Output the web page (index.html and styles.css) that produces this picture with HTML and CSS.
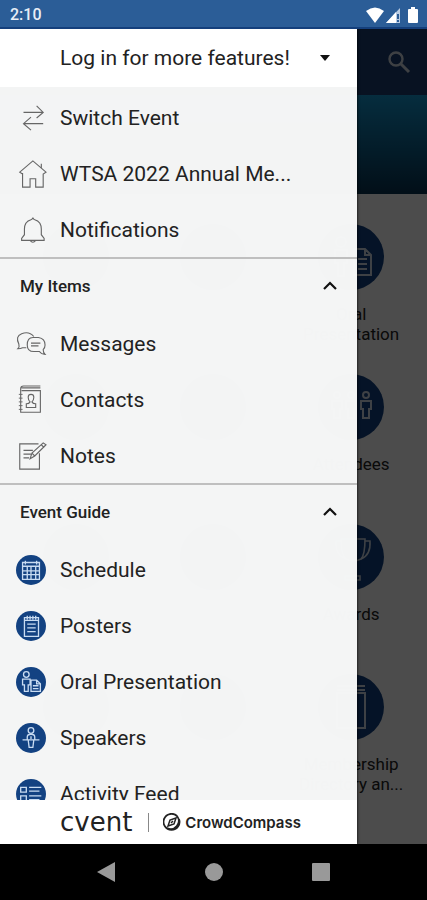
FILE: index.html
```html
<!DOCTYPE html>
<html lang="en">
<head>
    <meta charset="UTF-8">
    <meta name="viewport" content="width=device-width, initial-scale=1.0">
    <title>WTSA 2022 Annual Meeting</title>
    <link rel="stylesheet" href="styles.css">
</head>
<body>
    <header class="status-bar">
        <span>2:10</span>
        <svg class="status-icons" width="56" height="18" viewBox="0 0 56 18" fill="#fff">
            <path d="M1 5 Q10 -2 19 5 L10 17 Z"/>
            <path d="M35 2 V17 H21 Z" fill="#b9cbe2"/>
            <path d="M31 6 V17 H21 Z"/>
            <path d="M32 8 h2 v5 h-2 z M32 14 h2 v2 h-2 z" fill="#2b5d97"/>
            <path d="M46 1 h4 v2 h2 q1 0 1 1 v12 q0 1 -1 1 h-8 q-1 0 -1 -1 v-12 q0 -1 1 -1 h2 z"/>
        </svg>
    </header>

    <main class="stage">
        <!-- Event home, under the open menu -->
        <div class="home">
            <div class="app-bar">
                <button class="search-button" aria-label="Search">
                    <svg width="24" height="24" viewBox="0 0 24 24" fill="none" stroke="#fff" stroke-width="2.4">
                        <circle cx="9" cy="9" r="6.5"/>
                        <path d="M14 14 L22 22" stroke-width="3"/>
                    </svg>
                </button>
            </div>
            <div class="banner"></div>
            <div class="tiles">
                <div class="tile"><span class="disc"></span></div>
                <div class="tile"><span class="disc"></span></div>
                <a class="tile" href="#oral">
                    <span class="disc">
                        <svg width="44" height="44" viewBox="0 0 44 44" fill="none" stroke="#fff" stroke-width="2">
                            <circle cx="12" cy="7" r="5"/>
                            <path d="M6 15 h12 v13 h-3 v13 h-6 v-13 h-3 z"/>
                            <path d="M25 14 H36 L42 20 V40 H25 Z M36 14 V20 H42 M29 24 H38 M29 29 H38 M29 34 H38"/>
                        </svg>
                    </span>
                    <span class="tile-label">Oral Presentation</span>
                </a>
                <div class="tile"><span class="disc"></span></div>
                <div class="tile"><span class="disc"></span></div>
                <a class="tile" href="#attendees">
                    <span class="disc">
                        <svg width="44" height="44" viewBox="0 0 44 44" fill="none" stroke="#fff" stroke-width="2">
                            <circle cx="8" cy="10" r="3"/>
                            <path d="M3 16 h10 v8 h-2 v9 h-6 v-9 h-2 z"/>
                            <circle cx="37" cy="10" r="3"/>
                            <path d="M32 16 h10 v8 h-2 v9 h-6 v-9 h-2 z"/>
                            <circle cx="22" cy="10" r="3"/>
                            <path d="M17 16 h10 v8 h-2 v9 h-6 v-9 h-2 z"/>
                        </svg>
                    </span>
                    <span class="tile-label">Attendees</span>
                </a>
                <div class="tile"><span class="disc"></span></div>
                <div class="tile"><span class="disc"></span></div>
                <a class="tile" href="#awards">
                    <span class="disc">
                        <svg width="44" height="44" viewBox="0 0 44 44" fill="none" stroke="#fff" stroke-width="1.6">
                            <path d="M12 4 H36 Q36 20 32 24 Q24 28 17 24 Q12 20 12 4 Z"/>
                            <path d="M36 6 H41 Q42 20 32 24 M12 6 H7 Q6 20 17 24"/>
                            <path d="M22 27 V38 M16 45 H31 V41 H16 Z"/>
                        </svg>
                    </span>
                    <span class="tile-label">Awards</span>
                </a>
                <div class="tile"><span class="disc"></span></div>
                <div class="tile"><span class="disc"></span></div>
                <a class="tile" href="#directory">
                    <span class="disc">
                        <svg width="44" height="44" viewBox="0 0 44 44" fill="none" stroke="#fff" stroke-width="2">
                            <path d="M8 1 H36 M8 5 H36 M8 8 H36 V43 H8 Z"/>
                        </svg>
                    </span>
                    <span class="tile-label">Membership Directory an...</span>
                </a>
            </div>
        </div>
        <div class="scrim"></div>

        <!-- Side menu -->
        <nav class="drawer">
            <button class="login">
                Log in for more features!
                <svg width="12" height="6" viewBox="0 0 12 6"><path d="M1 0 H11 L6 6 Z" fill="#111"/></svg>
            </button>
            <div class="menu">
                <ul class="menu-list first">
                    <li><a href="#switch">
                        <svg class="icon" viewBox="0 0 32 32">
                            <path d="M8 10 H29 M22 3 L29 10 L22 16 M29 22 H8 M16 15 L8 22 L16 29"/>
                        </svg>
                        <span>Switch Event</span>
                    </a></li>
                    <li><a href="#event">
                        <svg class="icon" viewBox="0 0 32 32">
                            <path d="M7 16 L4 14 L18 2 L32 14 L29 16 V30 H21 V21 H15 V30 H7 V15 M27 10 V5"/>
                        </svg>
                        <span>WTSA 2022 Annual Me...</span>
                    </a></li>
                    <li><a href="#notifications">
                        <svg class="icon" viewBox="0 0 32 32">
                            <path d="M18 3 Q19 5 20 5 Q27 7 27 15 V21 L30 25 V27 H6 V25 L9 21 V15 Q9 7 16 5 Q17 5 18 3 M15 27 Q18 31 21 27"/>
                        </svg>
                        <span>Notifications</span>
                    </a></li>
                </ul>

                <button class="section">
                    My Items
                    <svg width="14" height="9" viewBox="0 0 14 9"><path d="M1 8 L7 2 L13 8" fill="none" stroke="#111" stroke-width="2.2"/></svg>
                </button>
                <ul class="menu-list">
                    <li><a href="#messages">
                        <svg class="icon" viewBox="0 0 32 32">
                            <path d="M11 20 H7 Q5 21 2 21 Q4 19 3 16 Q-1 8 6 5 Q14 2 19 8"/>
                            <path d="M18 9 H24 Q31 10 31 17 Q31 20 29 22 Q29 25 31 27 Q27 27 25 24 H19 Q12 24 12 17 Q12 9 18 9 Z M16 15 H26 M16 18 H24"/>
                        </svg>
                        <span>Messages</span>
                    </a></li>
                    <li><a href="#contacts">
                        <svg class="icon" viewBox="0 0 32 32">
                            <path d="M26 1 H8 Q5 1 5 4 V29 H26 V6 H6 M6 3 H26"/>
                            <path d="M3 10 H7 M3 14 H7 M3 18 H7 M3 22 H7 M3 26 H7" stroke-width="1"/>
                            <path d="M16 10 Q19 10 19 13 Q19 16 17 18 Q18 20 21 20 V24 H11 V20 Q14 20 15 18 Q13 16 13 13 Q13 10 16 10 Z"/>
                        </svg>
                        <span>Contacts</span>
                    </a></li>
                    <li><a href="#notes">
                        <svg class="icon" viewBox="0 0 32 32">
                            <path d="M24 3 H4 V30 H25 V13 M8 10 H18 M8 14 H16 M8 18 H14"/>
                            <path d="M15 19 L17 13 L29 2 L32 4 L20 16 Z M17 13 L20 16 M27 4 L30 7"/>
                        </svg>
                        <span>Notes</span>
                    </a></li>
                </ul>

                <button class="section">
                    Event Guide
                    <svg width="14" height="9" viewBox="0 0 14 9"><path d="M1 8 L7 2 L13 8" fill="none" stroke="#111" stroke-width="2.2"/></svg>
                </button>
                <ul class="menu-list">
                    <li><a href="#schedule">
                        <svg class="icon badge" viewBox="0 0 32 32">
                            <circle cx="16" cy="16" r="16"/>
                            <path d="M7 8 H25 V26 H7 Z M7 12 H25 M7 17 H25 M7 21 H25 M12 12 V26 M16 12 V26 M21 12 V26 M10 6 V10 M22 6 V10"/>
                        </svg>
                        <span>Schedule</span>
                    </a></li>
                    <li><a href="#posters">
                        <svg class="icon badge" viewBox="0 0 32 32">
                            <circle cx="16" cy="16" r="16"/>
                            <path d="M9 7 H24 V27 H9 Z M9 10 H24 M12 5 V9 M15 5 V9 M18 5 V9 M21 5 V9 M12 14 H21 M12 18 H21 M12 22 H21"/>
                        </svg>
                        <span>Posters</span>
                    </a></li>
                    <li><a href="#oral">
                        <svg class="icon badge" viewBox="0 0 32 32">
                            <circle cx="16" cy="16" r="16"/>
                            <circle class="line" cx="11" cy="8" r="3"/>
                            <path d="M7 13 H15 V19 H13 V26 H9 V19 H7 Z M16 14 H22 L26 18 V26 H16 Z M22 14 V18 H26 M18 20 H24 M18 23 H24"/>
                        </svg>
                        <span>Oral Presentation</span>
                    </a></li>
                    <li><a href="#speakers">
                        <svg class="icon badge" viewBox="0 0 32 32">
                            <circle cx="16" cy="16" r="16"/>
                            <circle class="line" cx="16" cy="8" r="3"/>
                            <path d="M12 18 V15 Q12 12 16 12 Q20 12 20 15 V18 M7 18 H25 M13 18 L14 26 H18 L19 18 M16 14 V17"/>
                        </svg>
                        <span>Speakers</span>
                    </a></li>
                    <li><a href="#feed">
                        <svg class="icon badge" viewBox="0 0 32 32">
                            <circle cx="16" cy="16" r="16"/>
                            <path d="M5 9 H11 V14 H5 Z M5 18 H11 V23 H5 Z M14 9 H27 M14 13 H25 M14 18 H27 M14 22 H25"/>
                        </svg>
                        <span>Activity Feed</span>
                    </a></li>
                </ul>
            </div>
            <footer class="brand">
                <span class="cvent">cvent</span>
                <span class="bar"></span>
                <svg width="18" height="18" viewBox="0 0 18 18" fill="none" stroke="#222" stroke-width="1.8">
                    <path d="M14 3 A8 8 0 1 0 16 6 M4 15 A8 8 0 0 0 14 3"/>
                    <path d="M13 5 L11 11 L5 13 L7 7 Z M8 10 L10 8" stroke-width="1.5"/>
                </svg>
                <span class="crowd">CrowdCompass</span>
            </footer>
        </nav>
    </main>

    <div class="system-nav">
        <button aria-label="Back"><svg width="20" height="20" viewBox="0 0 20 20"><path d="M0 10 L18 0 V20 Z"/></svg></button>
        <button aria-label="Home"><svg width="20" height="20" viewBox="0 0 20 20"><circle cx="10" cy="10" r="9"/></svg></button>
        <button aria-label="Recent apps"><svg width="20" height="20" viewBox="0 0 20 20"><rect x="1" y="1" width="18" height="18" rx="1"/></svg></button>
    </div>
</body>
</html>
```
FILE: styles.css
```css
* {
    box-sizing: border-box;
}
body {
    margin: 0;
    height: 100vh;
    display: flex;
    flex-direction: column;
    font-family: Roboto, "Liberation Sans", sans-serif;
    color: #222;
}
button {
    border: 0;
    padding: 0;
    background: none;
    font: inherit;
    color: inherit;
    cursor: pointer;
}
a {
    color: inherit;
    text-decoration: none;
}
svg {
    display: block;
    flex: none;
}

.status-bar {
    height: 29px;
    flex: none;
    padding: 2px 6px 0 10px;
    display: flex;
    align-items: center;
    justify-content: space-between;
    background: #2b5d97;
    border-bottom: 2px solid #143f7c;
    color: #e8eef6;
    font-size: 16px;
    font-weight: 500;
}

.stage {
    flex: 1;
    min-height: 0;
    position: relative;
    overflow: hidden;
}

/* Event home */
.home {
    background: #fff;
}
.app-bar {
    height: 66px;
    padding: 0 16px;
    display: flex;
    align-items: center;
    justify-content: flex-end;
    background: #1b3f72;
}
.search-button {
    opacity: 0.8;
}
.banner {
    height: 99px;
    background: linear-gradient(#1496d0, #073250);
}
.tiles {
    padding: 30px 7px 0;
    display: grid;
    grid-template-columns: repeat(3, 1fr);
    grid-auto-rows: 150px;
}
.tile {
    display: flex;
    flex-direction: column;
    align-items: center;
    gap: 14px;
}
.disc {
    width: 66px;
    height: 66px;
    flex: none;
    display: flex;
    align-items: center;
    justify-content: center;
    border-radius: 50%;
    background: #134282;
}
.disc svg {
    opacity: 0.8;
    overflow: visible;
}
.tile-label {
    width: 110px;
    text-align: center;
    font-size: 17px;
    line-height: 20px;
}
.scrim {
    position: absolute;
    inset: 0;
    background: rgba(0, 0, 0, 0.7);
}

/* Side menu */
.drawer {
    position: absolute;
    inset: 0 70px 0 0;
    display: flex;
    flex-direction: column;
    background: rgba(247, 248, 248, 0.985);
    box-shadow: 0 0 3px #000;
}
.login {
    height: 58px;
    flex: none;
    padding: 0 26px 0 60px;
    display: flex;
    align-items: center;
    justify-content: space-between;
    background: #fff;
    font-size: 21px;
}
.menu {
    flex: 1;
    min-height: 0;
    overflow: hidden;
}
.menu-list {
    margin: 0;
    padding: 0;
    list-style: none;
}
.first {
    padding-top: 2px;
}
.menu-list a {
    height: 56px;
    padding: 1px 0 0 16px;
    display: flex;
    align-items: center;
    gap: 14px;
    font-size: 21px;
}
.icon {
    width: 30px;
    height: 30px;
    overflow: visible;
    fill: none;
    stroke: #666;
    stroke-width: 1.2;
}
.badge {
    stroke: #c9dcf2;
    stroke-width: 1.4;
}
.badge circle {
    fill: #134282;
    stroke: none;
}
.badge .line {
    fill: none;
    stroke: #c9dcf2;
}
.section {
    width: 100%;
    height: 58px;
    padding: 0 20px 3px;
    display: flex;
    align-items: center;
    justify-content: space-between;
    border-top: 2px solid #bfbfbf;
    font-size: 17px;
    font-weight: 500;
}
.brand {
    height: 44px;
    flex: none;
    padding-left: 60px;
    display: flex;
    align-items: center;
    background: #fff;
}
.cvent {
    font-family: "DejaVu Sans", sans-serif;
    font-size: 26px;
    line-height: 30px;
}
.bar {
    width: 1px;
    height: 19px;
    margin: 0 14px 0 16px;
    background: #888;
}
.crowd {
    margin-left: 4px;
    font-family: Inter, sans-serif;
    font-size: 15px;
    font-weight: 600;
}

.system-nav {
    height: 56px;
    flex: none;
    padding: 0 53px;
    display: grid;
    grid-template-columns: repeat(3, 1fr);
    background: #000;
}
.system-nav button {
    display: flex;
    align-items: center;
    justify-content: center;
}
.system-nav svg {
    fill: #999;
}
```
